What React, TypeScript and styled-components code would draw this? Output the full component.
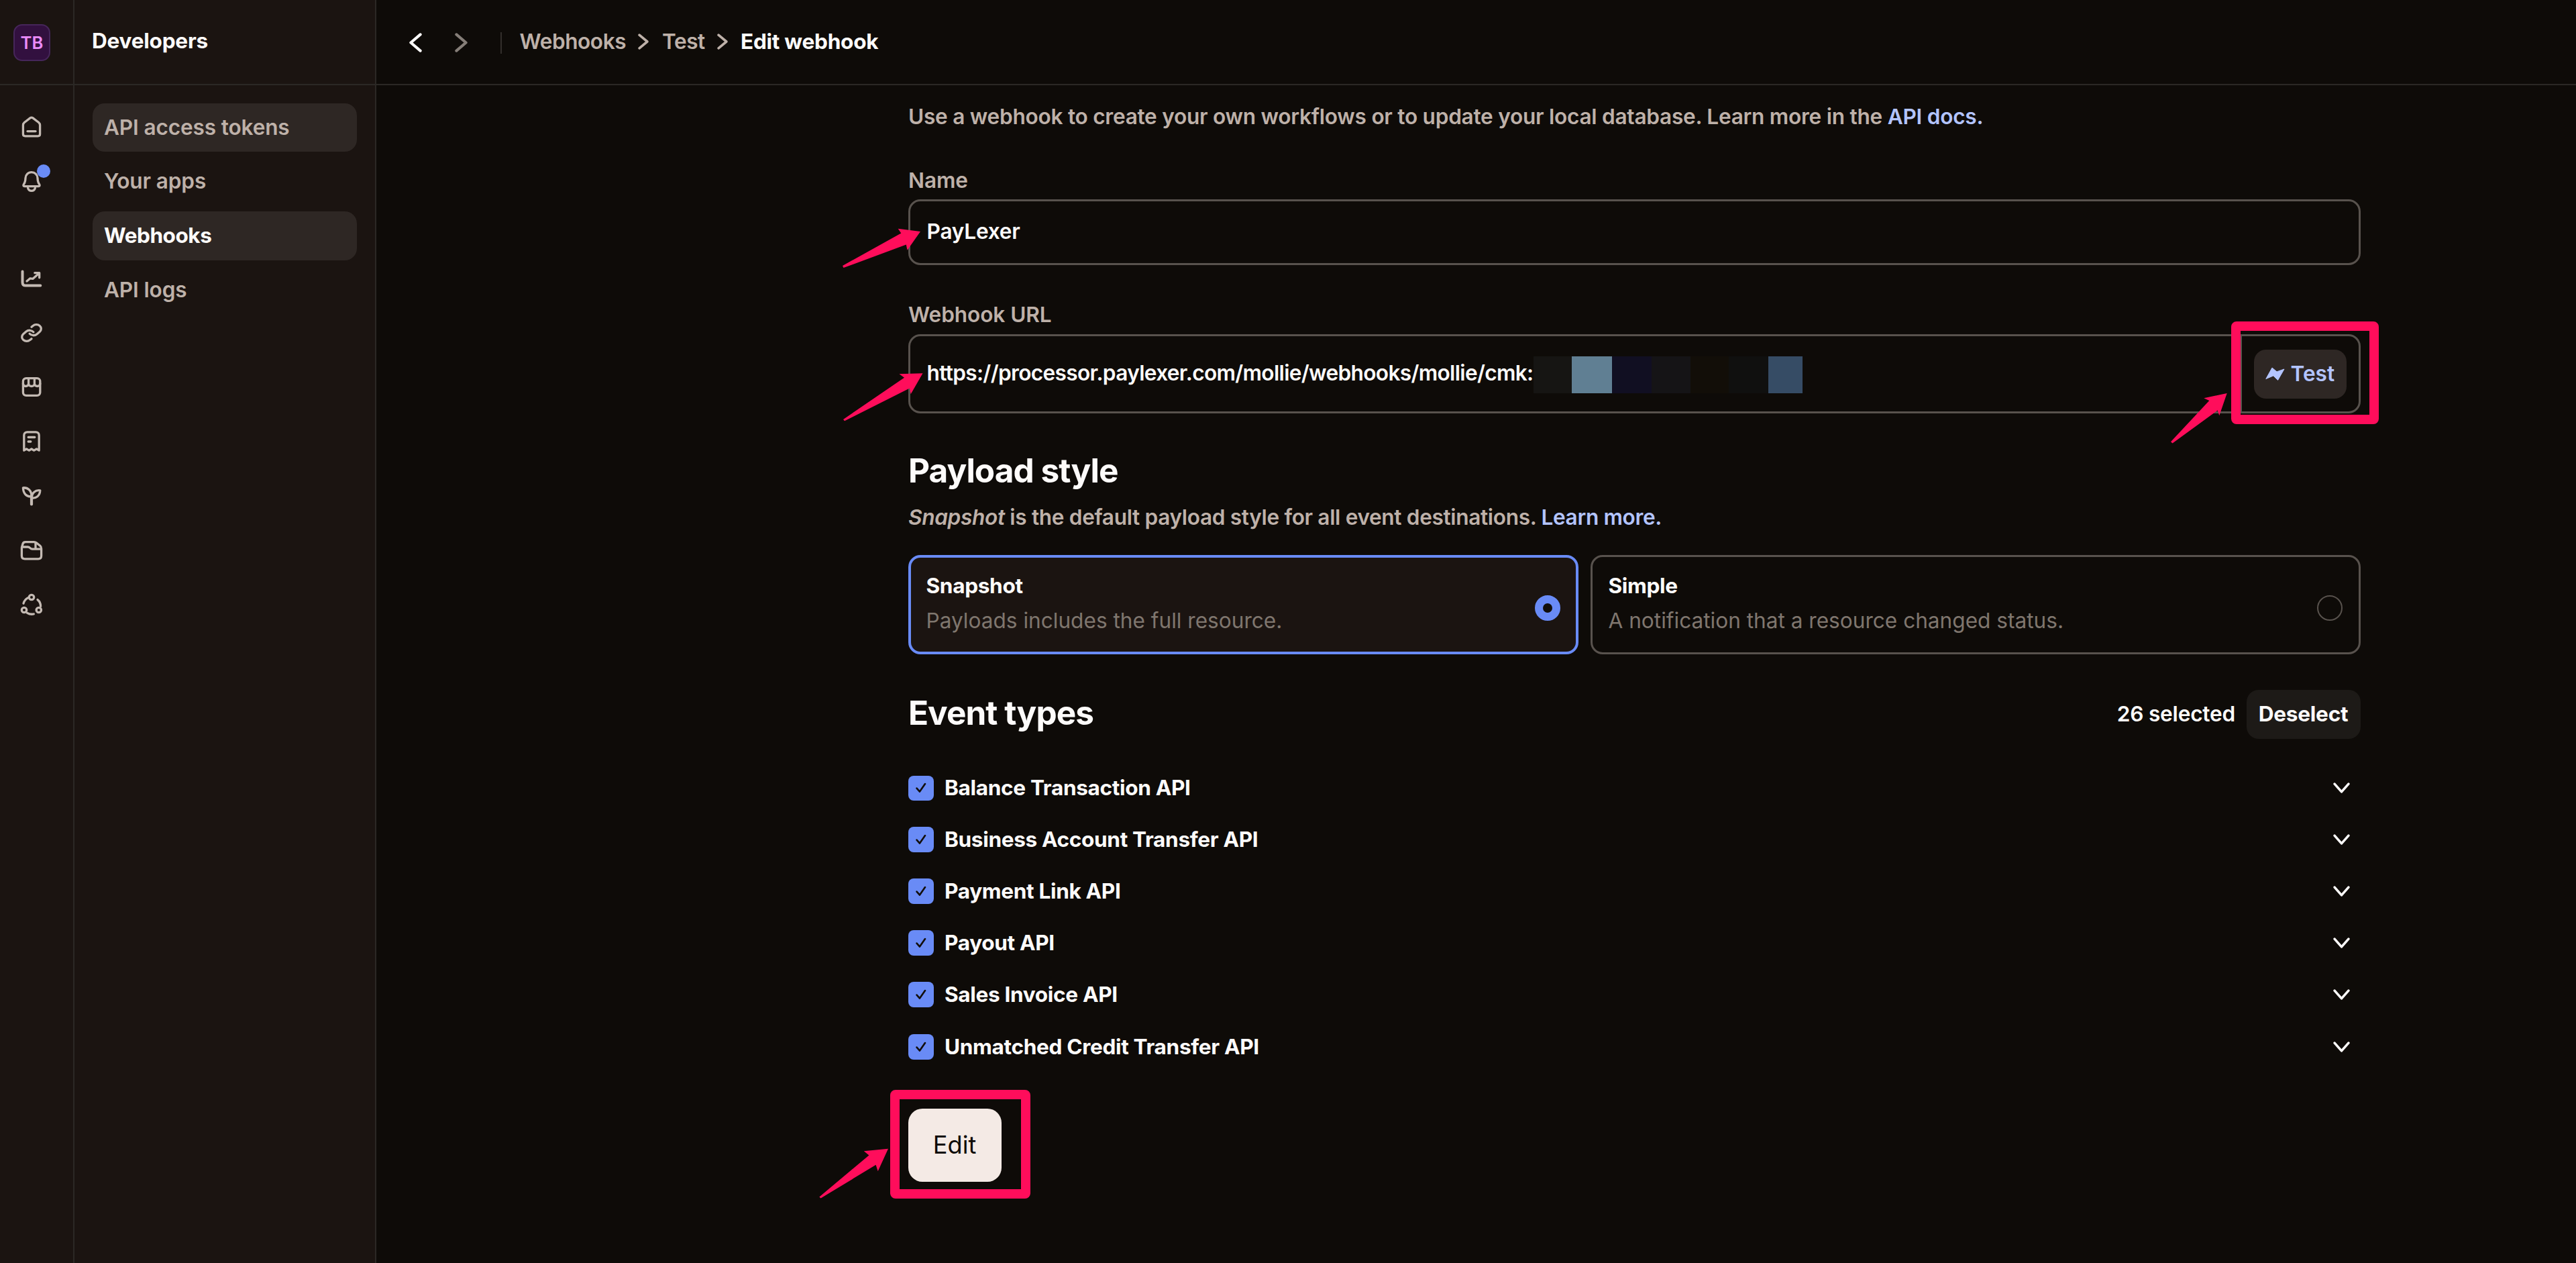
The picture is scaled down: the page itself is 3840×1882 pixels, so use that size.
import React from "react";
import styled, { createGlobalStyle } from "styled-components";

const color = {
  page: "#0e0b08",
  side: "#1b1411",
  line: "#2b2825",
  active: "#2e2724",
  muted: "#beb1a9",
  faint: "#7f766e",
  text: "#fdfbfa",
  border: "#58524d",
  blue: "#698bf6",
  link: "#b3c4ff",
  mark: "#ff0d5b",
};

const weight = {
  regular: 430,
  medium: 570,
  bold: 680,
};

const GlobalStyle = createGlobalStyle`
  * { box-sizing: border-box; }
  body {
    margin: 0;
    background: ${color.page};
    color: ${color.text};
    font-family: Inter, "Liberation Sans", sans-serif;
    font-size: 31.6px;
    line-height: 46px;
    font-weight: ${weight.medium};
  }
  h1, h2, p { margin: 0; }
  button { font: inherit; color: inherit; border: 0; padding: 0; margin: 0; }
`;

const Shell = styled.div`
  position: relative;
  display: grid;
  grid-template-columns: 111px 450px 1fr;
  grid-template-rows: 127px 1fr;
  width: 3840px;
  height: 1882px;
  overflow: hidden;
`;

const Cell = styled.div<{ $side?: boolean; $head?: boolean }>`
  background: ${(p) => (p.$side ? color.side : color.page)};
  border-right: ${(p) => (p.$side ? `2px solid ${color.line}` : "0")};
  border-bottom: ${(p) => (p.$head ? `2px solid ${color.line}` : "0")};
  min-width: 0;
`;

const LogoCell = styled(Cell)`
  padding: 36px 0 0 20px;
`;

const Avatar = styled.div`
  width: 55px;
  height: 55px;
  border-radius: 13px;
  border: 2px solid #46265a;
  background: #32103f;
  color: #ea8bf8;
  font-size: 25.6px;
  line-height: 51px;
  text-align: center;
`;

const TitleCell = styled(Cell)`
  padding: 38px 0 0 26px;
`;

const SideTitle = styled.h1`
  margin: 0;
  font-size: 31.6px;
  line-height: 46px;
  font-weight: ${weight.bold};
  letter-spacing: -0.25px;
`;

const Rail = styled(Cell)`
  display: flex;
  flex-direction: column;
  padding: 44px 0 0 29px;
`;

const RailItem = styled.div<{ $gap?: number }>`
  position: relative;
  width: 36px;
  height: 36px;
  margin-top: ${(p) => p.$gap ?? 45}px;
  svg { display: block; }
`;

const Dot = styled.span`
  position: absolute;
  left: 26px;
  top: -8px;
  width: 20px;
  height: 20px;
  border-radius: 50%;
  background: ${color.blue};
`;

const Nav = styled(Cell)`
  display: flex;
  flex-direction: column;
  gap: 8.2px;
  padding: 26.5px 27px 0 26.5px;
`;

const NavItem = styled.div<{ $filled?: boolean; $current?: boolean }>`
  height: 72.8px;
  padding-left: 17.5px;
  border-radius: 18px;
  line-height: 72.4px;
  background: ${(p) => (p.$filled ? color.active : "transparent")};
  color: ${(p) => (p.$current ? color.text : color.muted)};
  font-weight: ${(p) => (p.$current ? weight.bold : weight.medium)};
  letter-spacing: ${(p) => (p.$current ? -0.5 : -0.15)}px;
`;

const TopBar = styled(Cell)`
  display: flex;
  align-items: center;
  padding-left: 49px;
`;

const TopIcon = styled.svg<{ $ml?: number; $mt?: number }>`
  display: block;
  flex: none;
  margin-left: ${(p) => p.$ml ?? 0}px;
  margin-top: ${(p) => p.$mt ?? 0}px;
`;

const Separator = styled.span`
  width: 2px;
  height: 32px;
  margin: 2px 26.5px 0 49px;
  background: #332f2c;
`;

const Crumb = styled.span<{ $current?: boolean; $width: number; $inset?: number }>`
  width: ${(p) => p.$width}px;
  padding-left: ${(p) => p.$inset ?? 0}px;
  white-space: nowrap;
  color: ${(p) => (p.$current ? color.text : color.muted)};
  font-weight: ${(p) => (p.$current ? weight.bold : weight.medium)};
  letter-spacing: ${(p) => (p.$current ? -0.28 : -0.45)}px;
  margin-top: -2px;
`;

const Main = styled(Cell)`
  padding: 24px 321.5px 0 793px;
`;

const Intro = styled.p`
  color: ${color.muted};
  letter-spacing: -0.26px;
  white-space: nowrap;
`;

const Accent = styled.a`
  color: ${color.link};
`;

const Label = styled.div<{ $top: number }>`
  margin-top: ${(p) => p.$top}px;
  color: ${color.muted};
  letter-spacing: -0.08px;
`;

const Field = styled.div<{ $height: number; $top: number }>`
  display: flex;
  align-items: center;
  height: ${(p) => p.$height}px;
  margin-top: ${(p) => p.$top}px;
  border: 3px solid ${color.border};
  border-radius: 18px;
  padding-left: 24.5px;
`;

const Value = styled.span<{ $tight?: boolean }>`
  white-space: nowrap;
  margin-top: -2px;
  letter-spacing: ${(p) => (p.$tight ? "-0.66px" : "-0.22px")};
`;

const Mosaic = styled.span`
  display: flex;
  height: 54.5px;
  margin-top: 3px;
`;

const Tile = styled.i<{ $w: number; $c: string }>`
  width: ${(p) => p.$w}px;
  background: ${(p) => p.$c};
`;

const Addon = styled.div`
  display: flex;
  align-items: center;
  width: 176.5px;
  height: 100%;
  margin-left: auto;
  padding-left: 17.5px;
  border-left: 3px solid ${color.border};
`;

const TestButton = styled.button`
  display: flex;
  align-items: center;
  gap: 9px;
  width: 138px;
  height: 73px;
  padding-left: 17px;
  border-radius: 18px;
  background: ${color.active};
  color: ${color.link};
`;

const Heading = styled.h2`
  font-size: 49.5px;
  line-height: 60px;
  font-weight: 700;
  letter-spacing: -0.95px;
`;

const PayloadHeading = styled(Heading)`
  margin-top: 55.4px;
`;

const Sub = styled.p`
  margin-top: 17px;
  color: ${color.muted};
  letter-spacing: -0.34px;
  white-space: nowrap;
`;

const Cards = styled.div`
  display: grid;
  grid-template-columns: 998.5px 1fr;
  gap: 18px;
  margin-top: 32.6px;
`;

const Card = styled.div<{ $on?: boolean }>`
  display: flex;
  align-items: center;
  justify-content: space-between;
  height: 148px;
  padding: 0 ${(p) => (p.$on ? 22.5 : 24)}px;
  border: ${(p) => (p.$on ? `4.5px solid ${color.blue}` : `3px solid ${color.border}`)};
  border-radius: 18px;
  background: ${(p) => (p.$on ? color.side : "transparent")};
`;

const CardText = styled.div`
  margin-top: -4px;
`;

const CardTitle = styled.div`
  font-weight: ${weight.bold};
  letter-spacing: -0.35px;
  line-height: 52px;
`;

const CardDesc = styled.div`
  font-weight: ${weight.regular};
  letter-spacing: 0;
  line-height: 52px;
  color: ${color.faint};
`;

const Radio = styled.span<{ $on?: boolean }>`
  width: 38px;
  height: 38px;
  margin-top: 10px;
  border-radius: 50%;
  border: ${(p) => (p.$on ? `12.5px solid ${color.blue}` : `2.5px solid ${color.border}`)};
  background: ${(p) => (p.$on ? "#120e0b" : "transparent")};
`;

const EventHead = styled.div`
  display: flex;
  align-items: center;
  height: 73px;
  margin-top: 53px;
`;

const EventHeading = styled(Heading)`
  margin-top: -4px;
`;

const Count = styled.span`
  margin-left: auto;
  letter-spacing: -0.2px;
`;

const Deselect = styled.button`
  width: 170px;
  height: 73px;
  margin-left: 16.5px;
  border-radius: 18px;
  background: #1d1a17;
  font-weight: ${weight.bold};
  letter-spacing: -0.25px;
`;

const EventList = styled.div`
  display: flex;
  flex-direction: column;
  margin-top: 35px;
`;

const EventRow = styled.div<{ $height: number }>`
  display: flex;
  align-items: center;
  height: ${(p) => p.$height}px;
  padding-right: 15.5px;
`;

const Check = styled.span`
  display: flex;
  align-items: center;
  justify-content: center;
  width: 37.5px;
  height: 37.5px;
  border-radius: 8px;
  background: ${color.blue};
`;

const EventName = styled.span`
  flex: 1;
  margin-left: 16.5px;
  font-weight: ${weight.bold};
  letter-spacing: -0.35px;
`;

const EditButton = styled.button`
  display: block;
  width: 139px;
  height: 109.5px;
  margin-top: 53px;
  padding-right: 1px;
  border-radius: 21px;
  background: #f4eae5;
  color: #0e0b08;
  font-size: 36.2px;
  font-weight: 430;
`;

const MarkBox = styled.div<{ $x: number; $y: number; $w: number; $h: number }>`
  position: absolute;
  left: ${(p) => p.$x}px;
  top: ${(p) => p.$y}px;
  width: ${(p) => p.$w}px;
  height: ${(p) => p.$h}px;
  border: 14.5px solid ${color.mark};
  border-radius: 8px;
`;

const Arrows = styled.svg`
  position: absolute;
  left: 0;
  top: 0;
  width: 3840px;
  height: 1882px;
  pointer-events: none;
  fill: ${color.mark};
`;

const IconSvg = ({ children }: { children: React.ReactNode }) => (
  <svg width="36" height="36" viewBox="0 0 36 36" fill="none" stroke="#c4bab3" strokeWidth="3.3" strokeLinecap="round" strokeLinejoin="round" overflow="visible">
    {children}
  </svg>
);

const icons = {
  home: (
    <>
      <path d="M5.4 15.6c0-1.7.6-3 1.9-4.1l8.6-6.6c1.3-1 2.9-1 4.2 0l8.6 6.6c1.3 1.1 1.9 2.4 1.9 4.1v13.2c0 1.8-1.2 3-3 3H8.4c-1.8 0-3-1.2-3-3z" />
      <path d="M12 24.6h12" />
    </>
  ),
  bell: (
    <>
      <path d="M18 3.6c-5.2 0-8.8 3.7-9 8.8-.2 4.6-.6 6.6-2.6 9.2-1 1.4-.6 3 1.2 3h20.8c1.8 0 2.2-1.6 1.2-3-2-2.6-2.4-4.6-2.6-9.2-.2-5.1-3.8-8.8-9-8.8z" />
      <path d="M12.6 27.2c.8 2.7 2.8 4.2 5.4 4.2s4.6-1.5 5.4-4.2" />
    </>
  ),
  chart: (
    <>
      <path strokeWidth="4" d="M4.5 7.5v16.2c0 3 1.8 4.9 4.8 4.9h22" />
      <path d="M11 22l5-4.2 3.8.6 9.2-8" />
      <path d="M22.8 9.6h6.9v7.2" />
    </>
  ),
  link: (
    <g transform="translate(18 18) scale(1.44 1.24) translate(-12 -12)">
      <path vectorEffect="non-scaling-stroke" d="M10 13a5 5 0 0 0 7.54.54l3-3a5 5 0 0 0-7.07-7.07l-1.5 1.5" />
      <path vectorEffect="non-scaling-stroke" d="M14 11a5 5 0 0 0-7.54-.54l-3 3a5 5 0 0 0 7.07 7.07l1.5-1.5" />
    </g>
  ),
  shop: (
    <>
      <rect x="5.4" y="4.6" width="25.4" height="25.8" rx="4.6" />
      <path d="M5.4 12.5c0 2.6 1.8 4 4 4s4.2-1.4 4.2-4c0 2.6 2 4 4.4 4s4.4-1.4 4.4-4c0 2.6 2 4 4.2 4s4.2-1.4 4.2-4M13.6 5v7.5M22.4 5v7.5" />
    </>
  ),
  receipt: (
    <>
      <path d="M6.8 31.2V8.6c0-2.8 1.9-4.8 4.8-4.8h12.8c2.9 0 4.8 2 4.8 4.8v22.6l-3.7-2.2-3.7 2.2L18 29l-3.8 2.2-3.7-2.2z" />
      <path d="M13.2 11.5h9.6M13.2 18h3.6" />
    </>
  ),
  sprout: (
    <>
      <path d="M18 30.5V18.5" strokeWidth="4.2" />
      <path d="M17.8 18.8c-6.8.8-12.2-4-12.4-13C12.4 5.2 18.4 10 17.8 18.8zM18.4 21c6.4 1 12.1-3.2 12.4-11.2-7-1-12.6 3.6-12.4 11.2z" />
    </>
  ),
  folder: (
    <>
      <path d="M3.4 14v12.2c0 2.8 1.8 4.6 4.6 4.6h20c2.8 0 4.6-1.8 4.6-4.6V15.5c0-1.8-.4-3-1.8-4.2l-5.6-4.4c-1-.8-2-1.200-3.400-1.200H9c-2.600 0-4 1.400-4.400 4z" />
      <path d="M4 13h8.400c1.400 0 2.200.4 3.200 1.400s2 1.800 3.600 1.800h13M24 7v9" />
    </>
  ),
  network: (
    <>
      <circle cx="18" cy="7" r="3.7" />
      <circle cx="7" cy="26" r="3.7" />
      <circle cx="28.8" cy="26" r="3.7" />
      <path d="M6 16.2c.8-3.4 3.2-6.600 7-8.600M27 10.600c3 2.400 4.600 5.800 4.600 9.800M11.500 30.300c2.600 1.600 6 2.400 9.800 1.700" />
    </>
  ),
};

const railItems: { icon: keyof typeof icons; gap?: number; dot?: boolean }[] = [
  { icon: "home", gap: 0 },
  { icon: "bell", dot: true, gap: 46 },
  { icon: "chart", gap: 108 },
  { icon: "link" },
  { icon: "shop" },
  { icon: "receipt" },
  { icon: "sprout" },
  { icon: "folder" },
  { icon: "network" },
];

const navItems = [
  { label: "API access tokens", filled: true },
  { label: "Your apps" },
  { label: "Webhooks", filled: true, current: true },
  { label: "API logs" },
];

const tiles: [number, string][] = [
  [57, "#161513"],
  [60.5, "#607f93"],
  [58.5, "#110f22"],
  [58, "#151416"],
  [57.5, "#120e08"],
  [59, "#10100f"],
  [50.6, "#364c65"],
];

const events: [string, number][] = [
  ["Balance Transaction API", 76.8],
  ["Business Account Transfer API", 76.8],
  ["Payment Link API", 76.8],
  ["Payout API", 76.8],
  ["Sales Invoice API", 78],
  ["Unmatched Credit Transfer API", 77.5],
];

const arrows = [
  "1372,345 1338.7,340.7 1343.3,347.5 1256,396 1257.5,399 1350.8,364.5 1352.5,372.7",
  "1375.5,556.3 1340.5,557.3 1348,562.7 1257,625 1259,627.3 1356,578.5 1357.7,587.3",
  "3319.7,586 3285.3,593.3 3293.3,597 3236,658.3 3238.5,660.5 3305.7,611.5 3308.3,619.3",
  "1324,1711.7 1287.8,1715.3 1295.4,1721.5 1221.4,1783.5 1223.5,1785.5 1305.6,1735.8 1308.7,1745.2",
];

interface ChevronProps {
  dir: "left" | "right" | "down";
  stroke: string;
  width: number;
  height: number;
  ml?: number;
  mt?: number;
  thickness?: number;
}

const Chevron = ({ dir, stroke, width, height, ml, mt, thickness = 3.6 }: ChevronProps) => {
  const i = thickness / 2 + 0.3;
  const points = {
    left: `${width - i},${i} ${i},${height / 2} ${width - i},${height - i}`,
    right: `${i},${i} ${width - i},${height / 2} ${i},${height - i}`,
    down: `${i},${i} ${width / 2},${height - i} ${width - i},${i}`,
  }[dir];
  return (
    <TopIcon $ml={ml} $mt={mt} width={width} height={height}>
      <polyline points={points} fill="none" stroke={stroke} strokeWidth={thickness} strokeLinecap="round" strokeLinejoin="round" />
    </TopIcon>
  );
};

export default function App() {
  return (
    <>
      <GlobalStyle />
      <Shell>
        <LogoCell $side $head>
          <Avatar>TB</Avatar>
        </LogoCell>
        <TitleCell $side $head>
          <SideTitle>Developers</SideTitle>
        </TitleCell>
        <TopBar $head>
          <Chevron dir="left" stroke={color.text} width={19} height={29} mt={2} thickness={4.2} />
          <Chevron dir="right" stroke="#857e78" width={19} height={29} ml={49} mt={2} thickness={4.2} />
          <Separator />
          <Crumb $width={175}>Webhooks</Crumb>
          <Chevron dir="right" stroke={color.muted} width={16} height={24} ml={1.5} mt={-2} />
          <Crumb $width={81} $inset={20}>Test</Crumb>
          <Chevron dir="right" stroke={color.muted} width={16} height={24} ml={21} mt={-2} />
          <Crumb $current $width={240} $inset={19}>Edit webhook</Crumb>
        </TopBar>

        <Rail $side>
          {railItems.map((item) => (
            <RailItem key={item.icon} $gap={item.gap}>
              <IconSvg>{icons[item.icon]}</IconSvg>
              {item.dot && <Dot />}
            </RailItem>
          ))}
        </Rail>

        <Nav $side>
          {navItems.map((item) => (
            <NavItem key={item.label} $filled={item.filled} $current={item.current}>
              {item.label}
            </NavItem>
          ))}
        </Nav>

        <Main>
          <Intro>
            Use a webhook to create your own workflows or to update your local database. Learn more in the <Accent>API docs.</Accent>
          </Intro>

          <Label $top={49}>Name</Label>
          <Field $height={98} $top={5}>
            <Value>PayLexer</Value>
          </Field>

          <Label $top={51}>Webhook URL</Label>
          <Field $height={118} $top={6}>
            <Value $tight>https://processor.paylexer.com/mollie/webhooks/mollie/cmk:</Value>
            <Mosaic>
              {tiles.map(([w, c]) => (
                <Tile key={c} $w={w} $c={c} />
              ))}
            </Mosaic>
            <Addon>
              <TestButton>
                <svg width="29" height="21" viewBox="0 0 29 21" fill={color.link} stroke={color.link} strokeWidth="1" strokeLinejoin="round">
                  <path d="M.8 17.600 10 1 17 6.900 28 3 18.600 19.400 11.800 12.900z" />
                </svg>
                Test
              </TestButton>
            </Addon>
          </Field>

          <PayloadHeading>Payload style</PayloadHeading>
          <Sub>
            <em>Snapshot</em> is the default payload style for all event destinations. <Accent>Learn more.</Accent>
          </Sub>
          <Cards>
            <Card $on>
              <CardText>
                <CardTitle>Snapshot</CardTitle>
                <CardDesc>Payloads includes the full resource.</CardDesc>
              </CardText>
              <Radio $on />
            </Card>
            <Card>
              <CardText>
                <CardTitle>Simple</CardTitle>
                <CardDesc>A notification that a resource changed status.</CardDesc>
              </CardText>
              <Radio />
            </Card>
          </Cards>

          <EventHead>
            <EventHeading>Event types</EventHeading>
            <Count>26 selected</Count>
            <Deselect>Deselect</Deselect>
          </EventHead>

          <EventList>
            {events.map(([name, height]) => (
              <EventRow key={name} $height={height}>
                <Check>
                  <svg width="16" height="16" viewBox="0 0 16 16" fill="none" stroke="#120e0b" strokeWidth="2.6" strokeLinecap="round" strokeLinejoin="round">
                    <path d="M1.6 8.6 6 13.6 14 2" />
                  </svg>
                </Check>
                <EventName>{name}</EventName>
                <Chevron dir="down" stroke={color.text} width={25} height={16} />
              </EventRow>
            ))}
          </EventList>

          <EditButton>Edit</EditButton>
        </Main>

        <MarkBox $x={3325.7} $y={479.3} $w={220} $h={152.5} />
        <MarkBox $x={1327} $y={1624.2} $w={208.7} $h={161.6} />
        <Arrows viewBox="0 0 3840 1882">
          {arrows.map((points) => (
            <polygon key={points} points={points} />
          ))}
        </Arrows>
      </Shell>
    </>
  );
}
